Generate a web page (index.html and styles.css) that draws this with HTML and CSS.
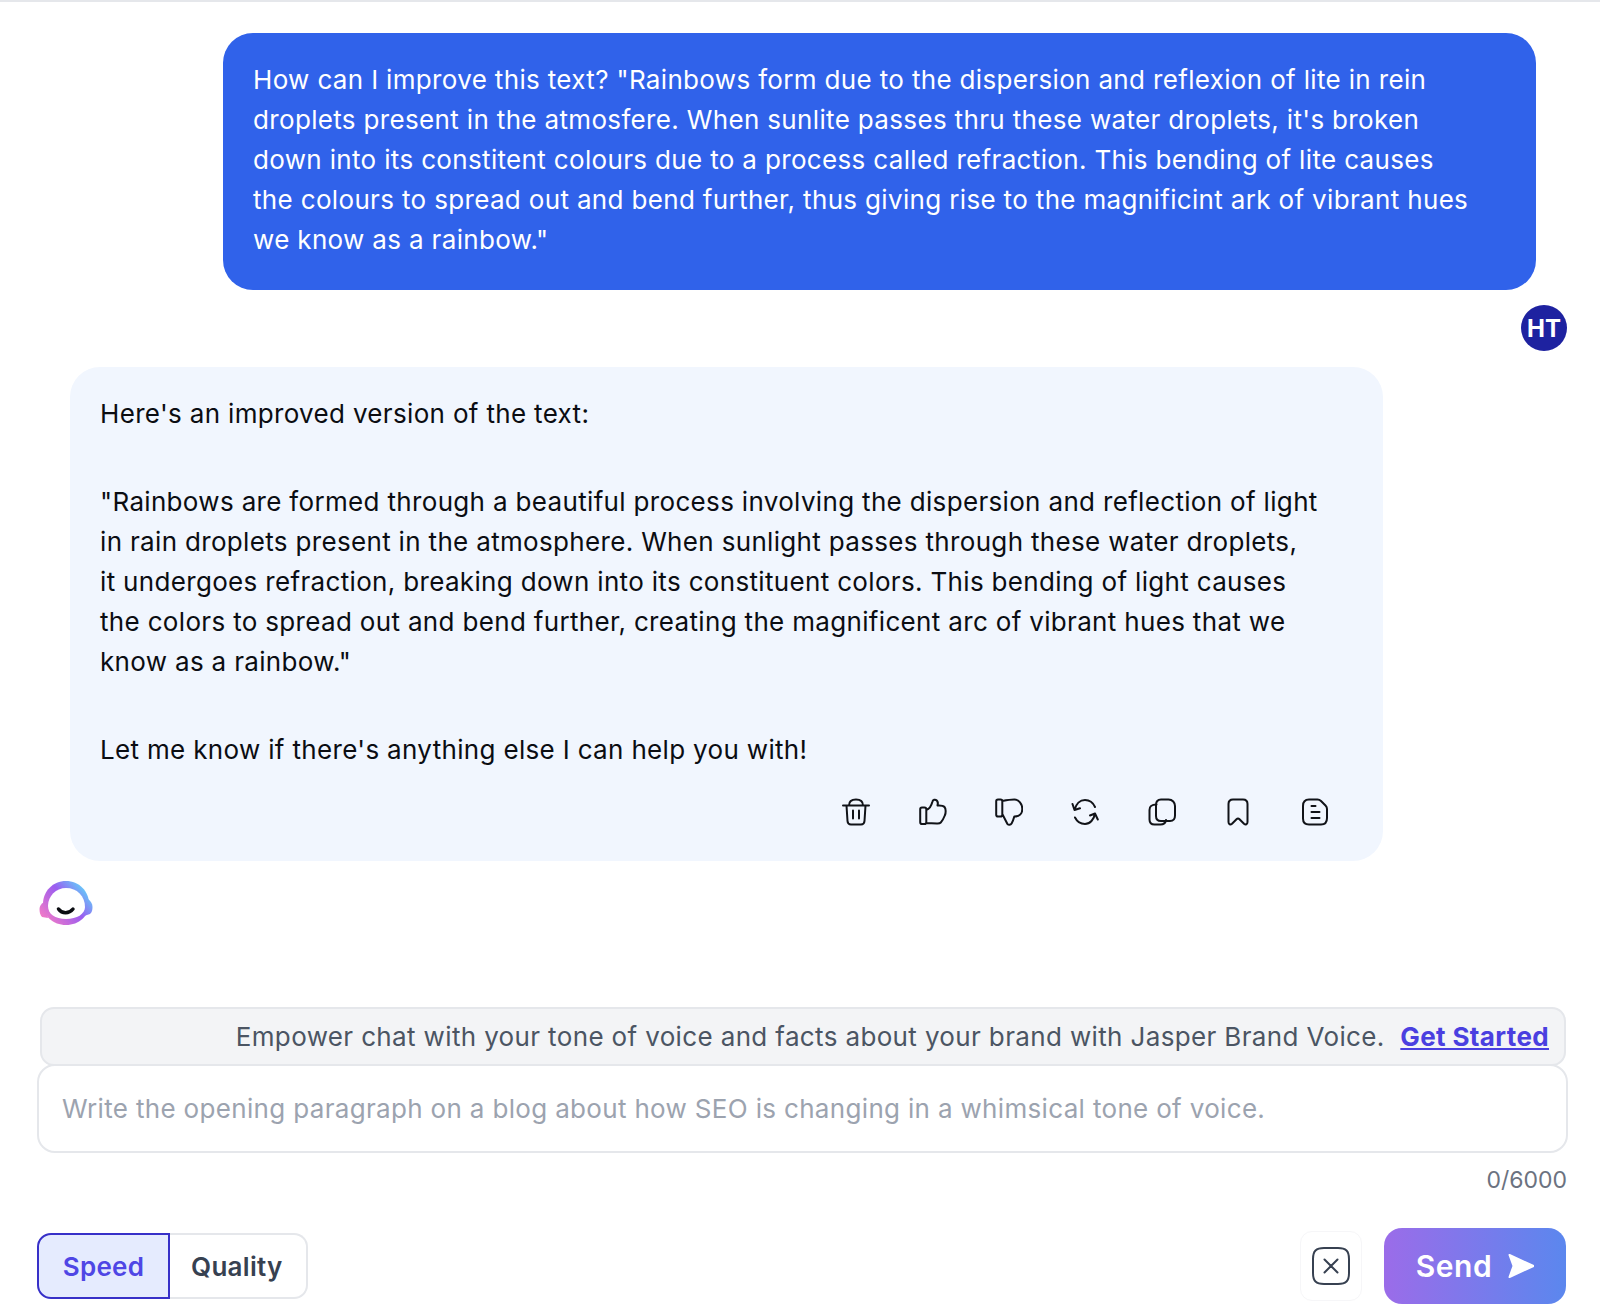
FILE: index.html
```html
<!DOCTYPE html>
<html lang="en">
<head>
  <meta charset="UTF-8" />
  <title>Chat</title>
  <link rel="stylesheet" href="styles.css">
</head>
<body>
  <div class="chat">
    <div class="user-bubble">How can I improve this text? "Rainbows form due to the dispersion and reflexion of lite in rein droplets present in the atmosfere. When sunlite passes thru these water droplets, it's broken down into its constitent colours due to a process called refraction. This bending of lite causes the colours to spread out and bend further, thus giving rise to the magnificint ark of vibrant hues we know as a rainbow."</div>
    <div class="avatar">HT</div>

    <div class="bot-bubble">
      <p>Here's an improved version of the text:</p>
      <p>"Rainbows are formed through a beautiful process involving the dispersion and reflection of light in rain droplets present in the atmosphere. When sunlight passes through these water droplets, it undergoes refraction, breaking down into its constituent colors. This bending of light causes the colors to spread out and bend further, creating the magnificent arc of vibrant hues that we know as a rainbow."</p>
      <p>Let me know if there's anything else I can help you with!</p>
      <div class="actions">
        <!-- trash -->
        <svg viewBox="0 0 28 28"><path d="M1 7.500h26M7 7.500C7 3.500 9.500 1.500 14 1.500s7 2 7 6M4.500 7.500l1 15.500c.2 2.400 1.400 3.500 3.500 3.500h10c2.100 0 3.300-1.100 3.500-3.500l1-15.500M11 12.500v8M17 12.500v8"/></svg>
        <!-- thumb up -->
        <svg viewBox="0 0 28 28"><path d="M3 9.500h2.500c1.200 0 1.800.6 1.800 1.800v13c0 1.200-.6 1.800-1.800 1.800H3c-1.200 0-1.800-.6-1.800-1.800v-13c0-1.200.6-1.800 1.800-1.800zM7.300 12c3-1 5-4 6-8 .5-2.500 3-3 4.500-1.500 1.200 1.200 1.300 3 .7 5 3-.2 5.500-.2 7 1.500 1.500 1.800 1.500 6 .3 8.500-1 2.500-2.500 5.500-4 7-1 1-2.500 1-4 .9L7.300 25"/></svg>
        <!-- thumb down -->
        <svg viewBox="0 0 28 28"><path d="M3 1.500h2.500c1.200 0 1.800.6 1.800 1.800v13.400c0 1.200-.6 1.800-1.800 1.800H3c-1.200 0-1.800-.6-1.800-1.800V3.300c0-1.200.6-1.800 1.800-1.800zM7.300 3c4-.8 9-1.500 12-1.500 4.500 0 8 4.500 8 9.500 0 4.500-3 7.500-8 7.500-.7 2.500-1.500 5-2.700 7-1 1.600-3 1.800-4.300.3L7.300 16"/></svg>
        <!-- refresh -->
        <svg viewBox="0 0 28 28"><path d="M3.500 12C5 6 9 2 14 2c4 0 8 2.500 10 7M24 15.500C23 21.500 19 26 14 26c-4.500 0-8-2.500-10-6.500M1.500 6l2 6 5.500-1.700M19 17.500l5-2 2.800 6"/></svg>
        <!-- copy -->
        <svg viewBox="0 0 28 28"><path d="M8.500 6.500C4 6.500 1.500 7.500 1.500 12v9.500c0 3.500 1.500 5 5 5h6c3.500 0 5-1.500 5.500-4.500"/><path d="M8 7c0-3.500 1.800-5.500 5-5.500h7.500c4 0 6.500 3 6.500 6.500v9.500c0 3.500-1.800 5.500-5 5.500H13c-3.200 0-5-1.800-5-5V7z"/></svg>
        <!-- bookmark -->
        <svg viewBox="0 0 28 28"><path d="M4.500 24V6c0-3 1.500-4.500 4.500-4.500h10c3 0 4.500 1.500 4.500 4.500v18c0 2.500-2 3-3.500 1.700l-4.500-4.500c-1-1-2-1-3 0L8 25.700C6.500 27 4.500 26.500 4.500 24z"/></svg>
        <!-- note -->
        <svg viewBox="0 0 28 28"><path d="M8 1.500h8.500c1.500 0 2.500.5 3.500 1.500l4.500 4.500c1 1 1.500 2 1.500 3.500V20c0 4.500-2 6.500-6 6.500H8c-4 0-6-2-6-6V8c0-4.500 2-6.500 6-6.500zM10.500 8h4M10.500 14h8M10.500 20h8"/></svg>
      </div>
    </div>

    <!-- Jasper logo -->
    <svg class="logo" viewBox="0 0 54 46">
      <defs>
        <linearGradient id="logoGrad" gradientUnits="userSpaceOnUse" x1="46" y1="4" x2="6" y2="40">
          <stop offset="0" stop-color="#5fd8fb"/>
          <stop offset="0.45" stop-color="#9a5cf0"/>
          <stop offset="1" stop-color="#f07ac8"/>
        </linearGradient>
      </defs>
      <g fill="url(#logoGrad)">
        <path d="M27 1C40 1 50 11 50 24C50 36 40 45 27 45C14 45 4 36 4 24C4 11 14 1 27 1z"/>
        <path d="M5 22C2 24 .5 26 .5 29C.5 32 1 35 3 37L9 38z"/>
        <path d="M49 19C52 21 53.500 24 53.500 27C53.500 30 53 32 51 34L45 36z"/>
      </g>
      <path fill="#fff" d="M27 8C38 8 46 16 46 27C46 34 38 39 27 39C16 39 9 34 9 26C9 16 17 8 27 8z"/>
      <path class="logo-smile" d="M19.500 29C23 34 30 34 34 29"/>
    </svg>

    <div class="brand-banner">Empower chat with your tone of voice and facts about your brand with Jasper Brand Voice. <a href="#">Get Started</a></div>
    <div class="prompt">Write the opening paragraph on a blog about how SEO is changing in a whimsical tone of voice.</div>
    <div class="counter">0/6000</div>

    <div class="toolbar">
      <div class="mode">
        <button class="mode-btn active">Speed</button>
        <button class="mode-btn">Quality</button>
      </div>
      <div class="toolbar-right">
        <div class="clear-btn">
          <svg viewBox="0 0 40 40"><path d="M13 2h14c8 0 11 3 11 11v14c0 8-3 11-11 11H13C5 38 2 35 2 27V13C2 5 5 2 13 2zM13.500 13.500l13 13M26.500 13.500l-13 13"/></svg>
        </div>
        <button class="send-btn">Send
          <svg viewBox="0 0 26 24"><path d="M1.500 1 25.500 12 1.500 23 5.500 12z"/></svg>
        </button>
      </div>
    </div>
  </div>
</body>
</html>
```

FILE: styles.css
```css
* {
  box-sizing: border-box;
}
body {
  margin: 0;
  background: #fff;
  font-family: Inter, 'Noto Sans', sans-serif;
  border-top: 2px solid #e5e7eb;
  height: 1312px;
  overflow: hidden;
}
.chat {
  display: flex;
  flex-direction: column;
  padding: 31px 32px 0 37px;
}
.user-bubble {
  align-self: flex-end;
  width: 1313px;
  height: 257px;
  margin-right: 32px;
  padding: 27px 60px 27px 30px;
  background: #3062ea;
  color: #fff;
  border-radius: 30px;
  font-size: 26px;
  line-height: 40px;
  letter-spacing: 0.34px;
}
.avatar {
  align-self: flex-end;
  width: 46px;
  height: 46px;
  margin: 15px 1px 0 0;
  border-radius: 50%;
  background: #1e22a0;
  color: #fff;
  font-size: 24px;
  font-weight: 700;
  display: flex;
  justify-content: center;
  align-items: center;
}
.bot-bubble {
  width: 1313px;
  height: 494px;
  margin: 16px 0 0 33px;
  padding: 27px 64.500px 27px 30px;
  background: #f1f6fe;
  border-radius: 30px;
  color: #0b0d12;
  font-size: 26px;
  line-height: 40px;
  letter-spacing: 0.33px;
}
.bot-bubble p {
  margin: 0 0 48px;
}
.bot-bubble p:nth-of-type(3) {
  margin-bottom: 0;
}
.actions {
  display: flex;
  justify-content: flex-end;
  gap: 48.400px;
  margin: 28px -35px 0 0;
  padding-right: 25px;
}
.actions svg {
  width: 28px;
  height: 28px;
  fill: none;
  stroke: #111318;
  stroke-width: 2;
  stroke-linecap: round;
  stroke-linejoin: round;
}
.logo {
  width: 54px;
  height: 46px;
  margin: 19px 0 0 2px;
}
.logo-smile {
  fill: none;
  stroke: #0b0d12;
  stroke-width: 3.500;
  stroke-linecap: round;
}
.brand-banner {
  margin: 81px 2px 0 3px;
  height: 59px;
  padding: 0 15px;
  background: #f3f4f6;
  border: 2px solid #e5e7eb;
  border-radius: 14px;
  color: #4b5563;
  font-size: 26px;
  line-height: 55px;
  letter-spacing: 0.36px;
  text-align: right;
}
.brand-banner a {
  margin-left: 8px;
  color: #4a3fe0;
  font-weight: 700;
}
.prompt {
  height: 89px;
  margin-top: -2px;
  padding: 0 23px;
  border: 2px solid #e5e7eb;
  border-radius: 18px;
  color: #9ca3af;
  font-size: 26px;
  line-height: 85px;
  letter-spacing: 0.33px;
}
.counter {
  margin-top: 12px;
  padding-right: 1px;
  text-align: right;
  color: #6b7280;
  font-size: 23px;
  line-height: 30px;
}
.toolbar {
  display: flex;
  justify-content: space-between;
  align-items: center;
  margin-top: 33px;
  padding-right: 2px;
}
.mode {
  display: flex;
}
.mode-btn {
  height: 66px;
  padding: 0 23px 0 21px;
  font-family: inherit;
  font-size: 26px;
  font-weight: 600;
  letter-spacing: 0.3px;
  color: #374151;
  background: #fff;
  border: 2px solid #e5e7eb;
  border-left: none;
  border-radius: 0 14px 14px 0;
}
.mode-btn.active {
  width: 133px;
  padding: 0;
  color: #4f46e5;
  background: #e5ebfe;
  border: 2px solid #3730c8;
  border-radius: 14px 0 0 14px;
}
.toolbar-right {
  display: flex;
  align-items: center;
  gap: 22px;
}
.clear-btn {
  width: 62px;
  height: 70px;
  border: 1px solid #f6f6f8;
  border-radius: 12px;
  display: flex;
  justify-content: center;
  align-items: center;
}
.clear-btn svg {
  width: 40px;
  height: 40px;
  fill: none;
  stroke: #374151;
  stroke-width: 2;
  stroke-linecap: round;
}
.send-btn {
  width: 182px;
  height: 76px;
  border: none;
  border-radius: 18px;
  background: linear-gradient(90deg, #9b6ce9, #5b87ee);
  color: #fff;
  font-family: inherit;
  font-size: 30px;
  font-weight: 600;
  letter-spacing: 0.6px;
  display: flex;
  justify-content: center;
  align-items: center;
  gap: 16px;
}
.send-btn svg {
  width: 26px;
  height: 24px;
  fill: #fff;
  stroke: #fff;
  stroke-width: 2;
  stroke-linejoin: round;
}
```
